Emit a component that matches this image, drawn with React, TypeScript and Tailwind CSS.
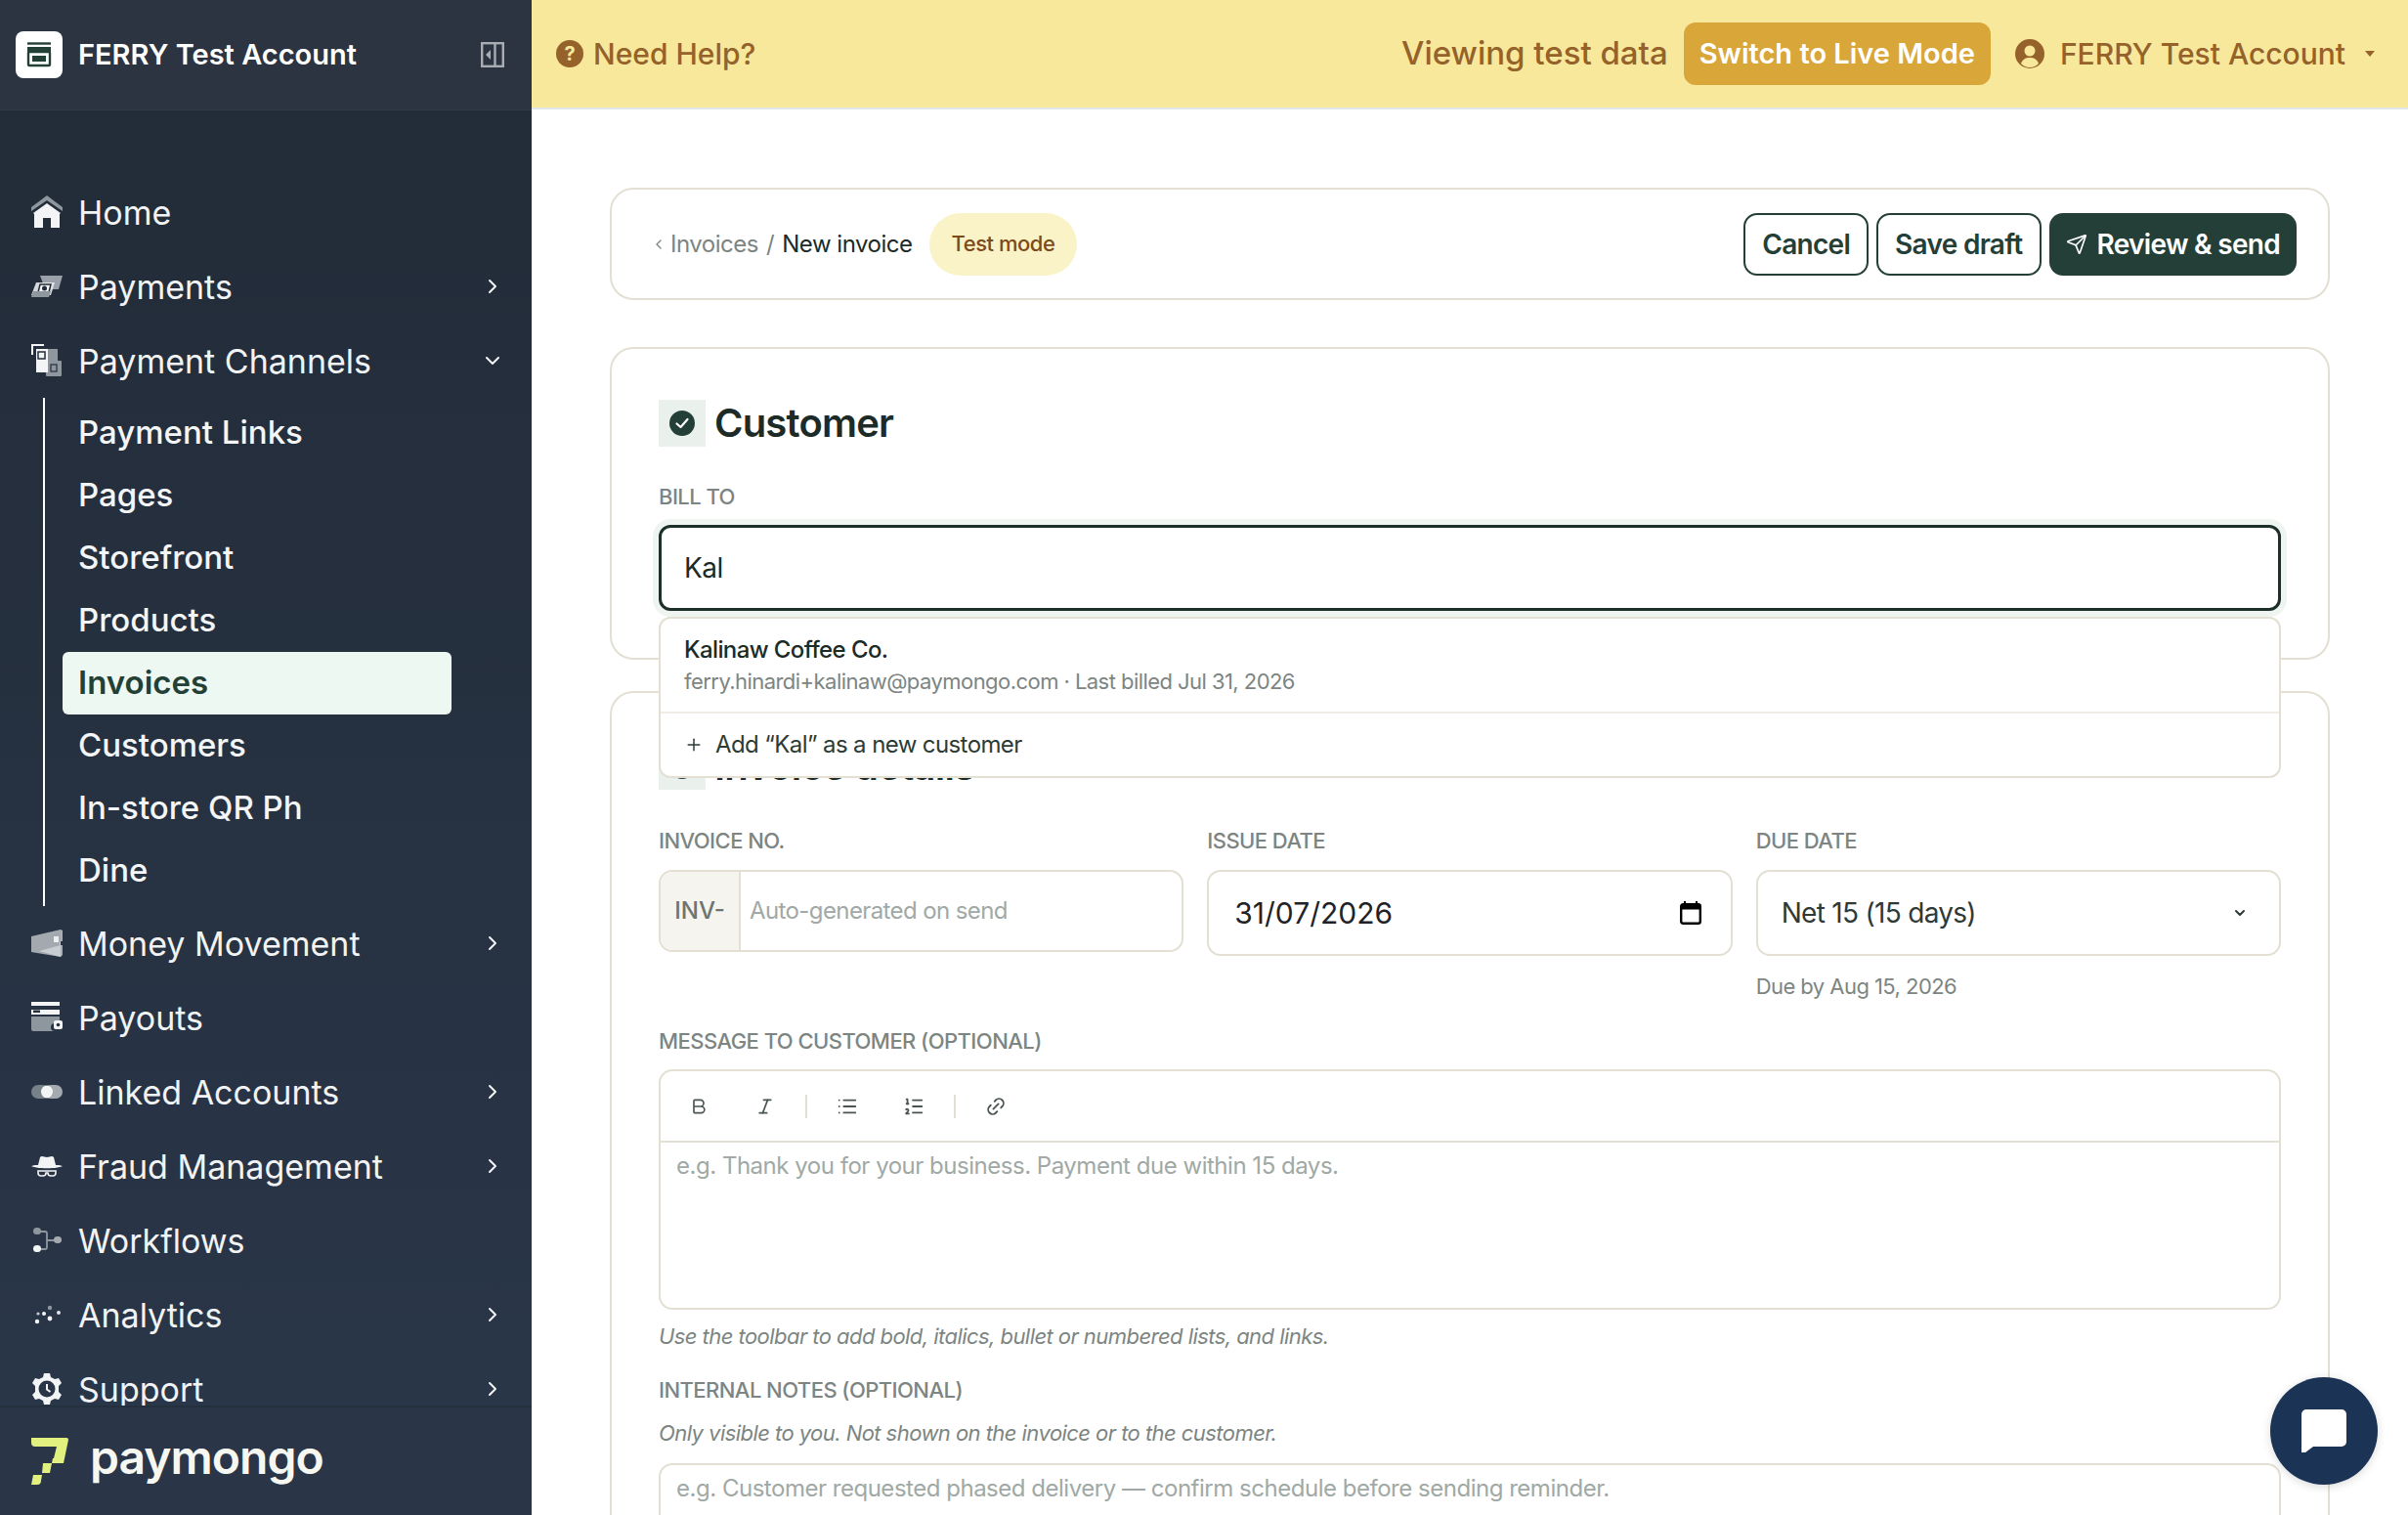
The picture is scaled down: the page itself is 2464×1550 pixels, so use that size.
import { Bold, ChevronDown, ChevronLeft, ChevronRight, Italic, Link2, List, ListOrdered, Plus, Send } from 'lucide-react'
import type { ReactNode } from 'react'

const inter = "font-['Inter',sans-serif]"

// duotone sidebar glyphs, white + muted grey like the real nav
const HomeIcon = () => (
  <svg width="32" height="34" viewBox="0 0 32 34">
    <path d="M16 0 32 12v4L16 5 0 16v-4z" fill="#8e969e" />
    <path d="M16 8 30 18l-1 1v14H20V23h-8v10H3V19l-1-1z" fill="#f3f4f5" />
  </svg>
)
const PaymentsIcon = () => (
  <svg width="32" height="24" viewBox="0 0 32 24">
    <path d="M9 1h23l-4 14H18l2-6h-8z" fill="#9aa1a8" />
    <path d="M5 8h19l-4 13H0z" fill="#e8eaec" opacity="0.9" />
    <path d="M9 10h11l-2 8H7z" fill="#f3f4f5" stroke="#232c38" strokeWidth="1.5" />
    <circle cx="13.5" cy="14" r="2.5" fill="#232c38" />
    <path d="M2 17h18l-2 6H0z" fill="#8e969e" />
  </svg>
)
const ChannelsIcon = () => (
  <svg width="32" height="34" viewBox="0 0 32 34">
    <rect x="16" y="5" width="11" height="12" fill="#8e969e" />
    <rect x="15" y="17" width="16" height="16" rx="1" fill="#8e969e" />
    <rect x="20" y="21" width="6" height="7" fill="none" stroke="#39424e" strokeWidth="1.5" />
    <rect x="5" y="5" width="12" height="24" fill="#f3f4f5" />
    <path d="M1 11V1h12" fill="none" stroke="#f3f4f5" strokeWidth="2" />
    <rect x="7" y="8" width="7" height="7" fill="none" stroke="#232c38" strokeWidth="1.5" />
  </svg>
)
const MoneyIcon = () => (
  <svg width="32" height="28" viewBox="0 0 32 28">
    <path d="M0 7 30 0v28L0 23z" fill="#a4a9af" />
    <path d="M30 0 32 1v11h-3v4h3v10l-2 2L8 22l22-6z" fill="#d5d8db" opacity="0.75" />
    <rect x="23" y="7" width="5" height="6" fill="#eceeef" />
  </svg>
)
const PayoutsIcon = () => (
  <svg width="32" height="32" viewBox="0 0 32 32">
    <path d="M0 0h29v4H0zM0 13h29v-5H0z" fill="#f3f4f5" />
    <rect x="2" y="8.5" width="7" height="2.5" fill="#26303c" />
    <path d="M0 15h29v7h-5a3 3 0 0 0 0 8H2a2 2 0 0 1-2-2z" fill="#8e969e" />
    <rect x="23" y="19" width="9" height="9" rx="2" fill="#f3f4f5" />
    <circle cx="27.5" cy="23.5" r="1.8" fill="#26303c" />
  </svg>
)
const LinkedIcon = () => (
  <svg width="32" height="16" viewBox="0 0 32 16">
    <rect x="0" y="1" width="19" height="14" rx="7" fill="#77818a" />
    <rect x="13" y="1" width="19" height="14" rx="7" fill="#a4aab0" />
    <ellipse cx="16" cy="8" rx="6" ry="6.5" fill="#f3f4f5" />
  </svg>
)
const FraudIcon = () => (
  <svg width="32" height="22" viewBox="0 0 32 22">
    <path d="M9 2c2-2 4 0 7 0s5-2 7 0l2 8H7z" fill="#f3f4f5" />
    <path d="M0 11c5-2 27-2 32 0-5 3-27 3-32 0z" fill="#f3f4f5" />
    <path d="M7 16h18v2a3 3 0 0 1-3 3h-2a3 3 0 0 1-3-3h-2a3 3 0 0 1-3 3h-2a3 3 0 0 1-3-3z" fill="none" stroke="#f3f4f5" strokeWidth="1.6" />
  </svg>
)
const WorkflowsIcon = () => (
  <svg width="32" height="26" viewBox="0 0 32 26">
    <path d="M8 4h6a2 2 0 0 1 2 2v14a2 2 0 0 1-2 2H8M16 13h8" fill="none" stroke="#8e969e" strokeWidth="1.8" />
    <rect x="2" y="0" width="8" height="7" rx="3.5" fill="#8e969e" />
    <rect x="2" y="18" width="8" height="7" rx="3.5" fill="#f3f4f5" />
    <rect x="23" y="9" width="8" height="7" rx="3.5" fill="#a4aab0" />
  </svg>
)
const AnalyticsIcon = () => (
  <svg width="32" height="20" viewBox="0 0 32 20">
    <circle cx="6" cy="17" r="2.2" fill="#f3f4f5" />
    <circle cx="7" cy="9" r="1.6" fill="#c7cbcf" />
    <circle cx="13" cy="9" r="2" fill="#f3f4f5" />
    <circle cx="19" cy="3" r="2.2" fill="#8e969e" />
    <circle cx="19" cy="14" r="2.4" fill="#f3f4f5" />
    <circle cx="28" cy="8" r="2" fill="#e3e5e7" />
  </svg>
)
const SupportIcon = () => (
  <svg width="32" height="32" viewBox="0 0 32 32">
    <path d="M13 0h6l1 4 4 2 4-1 3 5-3 3v6l3 3-3 5-4-1-4 2-1 4h-6l-1-4-4-2-4 1-3-5 3-3v-6L1 10l3-5 4 1 4-2z" fill="#f3f4f5" />
    <circle cx="16" cy="16" r="8.5" fill="#2a3648" />
    <path d="M16 11v5.5l3.5 2.5" fill="none" stroke="#f3f4f5" strokeWidth="2" />
  </svg>
)

function NavRow({ icon, label, chevron }: { icon: ReactNode; label: string; chevron?: 'right' | 'down' }) {
  return (
    <div className="flex h-[76px] shrink-0 items-center text-[34px] font-normal text-[#f1f3f4]">
      <div className="flex w-[80px] shrink-0 justify-center pl-[16px]">{icon}</div>
      <span className="flex-1">{label}</span>
      <div className="flex w-[64px] shrink-0 justify-center pr-[16px]">
        {chevron === 'right' && <ChevronRight size={24} strokeWidth={2} />}
        {chevron === 'down' && <ChevronDown size={24} strokeWidth={2} />}
      </div>
    </div>
  )
}

function Sidebar() {
  const subItems = ['Payment Links', 'Pages', 'Storefront', 'Products', 'Invoices', 'Customers', 'In-store QR Ph', 'Dine']
  return (
    <aside className={`flex h-full w-[544px] shrink-0 flex-col bg-gradient-to-b from-[#222b37] to-[#2a374a] ${inter}`}>
      <div className="flex h-[113px] shrink-0 items-center justify-between border-b border-[#303a46] bg-[#2b3440] pr-[28px] pl-[16px]">
        <div className="flex items-center gap-[16px]">
          <div className="flex h-[48px] w-[48px] items-center justify-center rounded-[8px] bg-white">
            <svg width="26" height="26" viewBox="0 0 26 26" fill="none">
              <path d="M1 1.5h24" stroke="#234036" strokeWidth="2.4" />
              <path d="M1 5h24l0 6H1z" fill="#234036" />
              <rect x="2" y="10" width="22" height="14" rx="1" stroke="#234036" strokeWidth="2.4" />
              <rect x="6" y="14" width="14" height="6" fill="#234036" />
            </svg>
          </div>
          <span className="text-[29px] font-semibold text-white">FERRY Test Account</span>
        </div>
        <svg width="24" height="26" viewBox="0 0 24 26" fill="none">
          <rect x="1.2" y="1.2" width="21.6" height="23.6" stroke="#a9adb2" strokeWidth="2.4" />
          <path d="M14.5 1v24" stroke="#a9adb2" strokeWidth="2.4" />
          <path d="M10 8v10l-5-5z" fill="#a9adb2" />
        </svg>
      </div>

      <nav className="flex min-h-0 flex-1 flex-col overflow-hidden pt-[66px]">
        <NavRow icon={<HomeIcon />} label="Home" />
        <NavRow icon={<PaymentsIcon />} label="Payments" chevron="right" />
        <NavRow icon={<ChannelsIcon />} label="Payment Channels" chevron="down" />
        <div className="ml-[44px] shrink-0 border-l-2 border-white py-[4px]">
          {subItems.map((item) =>
            item === 'Invoices' ? (
              <div key={item} className="ml-[18px] flex h-[64px] w-[398px] items-center rounded-[6px] bg-[#eef8f3] pl-[16px] text-[33px] font-semibold text-[#234036]">
                {item}
              </div>
            ) : (
              <div key={item} className="ml-[18px] flex h-[64px] w-[398px] items-center pl-[16px] text-[33px] font-medium text-[#f4f5f6]">
                {item}
              </div>
            ),
          )}
        </div>
        <NavRow icon={<MoneyIcon />} label="Money Movement" chevron="right" />
        <NavRow icon={<PayoutsIcon />} label="Payouts" />
        <NavRow icon={<LinkedIcon />} label="Linked Accounts" chevron="right" />
        <NavRow icon={<FraudIcon />} label="Fraud Management" chevron="right" />
        <NavRow icon={<WorkflowsIcon />} label="Workflows" />
        <NavRow icon={<AnalyticsIcon />} label="Analytics" chevron="right" />
        <NavRow icon={<SupportIcon />} label="Support" chevron="right" />
      </nav>

      <div className="flex h-[112px] shrink-0 items-center gap-[22px] border-t-2 border-[#25303f] bg-[#2a3648] pl-[32px]">
        <svg width="38" height="48" viewBox="0 0 38 48">
          <path d="M0 0h36a2 2 0 0 1 2 2l-5 24H21l1-5h1l3-12H4a4 4 0 0 1-4-4z" fill="#e2f07f" />
          <path d="M12 26h9l-2 10h-8zM2 38h9l-1 6a4 4 0 0 1-4 4H0z" fill="#e2f07f" />
        </svg>
        <span className={`-mt-[8px] text-[48px] leading-none font-semibold tracking-[-0.02em] text-[#f7f7f2]`}>paymongo</span>
      </div>
    </aside>
  )
}

function TopBar() {
  return (
    <header className={`flex h-[112px] shrink-0 items-center justify-between border-b-2 border-[#e2e6ea] bg-[#f8e89b] pr-[34px] pl-[25px] text-[#94622a] ${inter}`}>
      <div className="flex items-center gap-[10px]">
        <svg width="28" height="28" viewBox="0 0 28 28">
          <circle cx="14" cy="14" r="14" fill="#94622a" />
          <text x="14" y="21" textAnchor="middle" fontSize="20" fontWeight="700" fill="#f8e89b" fontFamily="Inter, sans-serif">?</text>
        </svg>
        <span className="text-[30px] font-medium">Need Help?</span>
      </div>
      <div className="flex items-center">
        <span className="text-[33px] font-medium">Viewing test data</span>
        <div className="ml-[16px] flex h-[64px] items-center rounded-[12px] bg-[#d9a63a] px-[16px] text-[29px] font-semibold text-white">Switch to Live Mode</div>
        <svg className="ml-[25px]" width="30" height="30" viewBox="0 0 30 30">
          <circle cx="15" cy="15" r="15" fill="#94622a" />
          <circle cx="15" cy="12" r="5.5" fill="#f8e89b" />
          <path d="M6 25c2-5 5-6 9-6s7 1 9 6a12 12 0 0 1-18 0z" fill="#f8e89b" />
        </svg>
        <span className="ml-[16px] text-[30px] font-medium">FERRY Test Account</span>
        <svg className="ml-[20px]" width="10" height="6" viewBox="0 0 10 6"><path d="M0 0h10L5 6z" fill="#94622a" /></svg>
      </div>
    </header>
  )
}

function FieldLabel({ children, className = '' }: { children: ReactNode; className?: string }) {
  return <div className={`text-[22px] leading-[30px] font-medium tracking-[-0.025em] text-[#7c8582] ${className}`}>{children}</div>
}

function SectionTitle({ title }: { title: string }) {
  return (
    <div className="flex items-center gap-[9px]">
      <div className="flex h-[48px] w-[48px] items-center justify-center bg-[#eaf1ed]">
        <svg width="26" height="26" viewBox="0 0 26 26">
          <circle cx="13" cy="13" r="13" fill="#233f38" />
          <path d="M7.5 13.5l4 3.5 7-8" fill="none" stroke="#fff" strokeWidth="2.2" strokeLinecap="round" strokeLinejoin="round" />
        </svg>
      </div>
      <h2 className="text-[40px] leading-[48px] font-semibold tracking-[-0.02em] text-[#1c2b27]">{title}</h2>
    </div>
  )
}

function ToolButton({ children }: { children: ReactNode }) {
  return <div className="flex h-[48px] w-[68px] items-center justify-center text-[#4a5451]">{children}</div>
}

function ToolSep() {
  return <div className="mx-[7px] h-[24px] w-[2px] bg-[#e3dfd3]" />
}

function Main() {
  return (
    <main className={`flex min-w-0 flex-1 flex-col overflow-hidden bg-white ${inter}`}>
      <TopBar />
      <div className="flex min-h-0 flex-1 flex-col gap-[48px] overflow-hidden px-[80px] pt-[80px]">
        <div className="flex h-[115px] shrink-0 items-center justify-between rounded-[24px] border-2 border-[#e3dfd3] pr-[32px] pl-[40px]">
          <div className="flex items-center text-[24px] tracking-[-0.02em]">
            <ChevronLeft size={16} className="text-[#7c8582]" />
            <span className="ml-[4px] text-[#7c8582]">Invoices</span>
            <span className="mx-[8px] text-[#7c8582]">/</span>
            <span className="text-[#1c2b27]">New invoice</span>
            <div className="ml-[17px] flex h-[64px] items-center rounded-full bg-[#fbf3c8] px-[23px] text-[22px] font-medium text-[#7d4a1a]">Test mode</div>
          </div>
          <div className="flex items-center gap-[8px] text-[28px] font-semibold tracking-[-0.025em]">
            <div className="flex h-[64px] items-center rounded-[14px] border-2 border-[#233f38] px-[17px] text-[#233f38]">Cancel</div>
            <div className="flex h-[64px] items-center rounded-[14px] border-2 border-[#233f38] px-[17px] text-[#233f38]">Save draft</div>
            <div className="flex h-[64px] items-center gap-[10px] rounded-[14px] bg-[#233f38] px-[17px] text-white">
              <Send size={22} strokeWidth={1.8} />
              Review &amp; send
            </div>
          </div>
        </div>

        <div className="-mt-[0px] flex shrink-0 flex-col gap-[32px]">
          <section className="relative h-[320px] rounded-[24px] border-2 border-[#e3dfd3] px-[48px] pt-[52px]">
            <SectionTitle title="Customer" />
            <FieldLabel className="mt-[36px]">BILL TO</FieldLabel>
            <div className="mt-[14px] flex h-[88px] items-center rounded-[12px] border-[3px] border-[#1c2f2a] pl-[23px] text-[28px] tracking-[-0.02em] text-[#1c2b27] shadow-[0_0_0_6px_#eef5f0]">Kal</div>
            <div className="absolute top-[274px] right-[48px] left-[48px] z-10 rounded-[12px] border-2 border-[#e3dfd3] bg-white">
              <div className="flex h-[97px] flex-col justify-center border-b-2 border-[#efede6] pl-[24px]">
                <div className="text-[24px] leading-[32px] font-medium tracking-[-0.025em] text-[#1c2b27]">Kalinaw Coffee Co.</div>
                <div className="text-[22px] leading-[32px] tracking-[-0.025em] text-[#7c8582]">ferry.hinardi+kalinaw@paymongo.com · Last billed Jul 31, 2026</div>
              </div>
              <div className="flex h-[64px] items-center gap-[12px] pl-[24px] text-[24px] tracking-[-0.025em] text-[#2d3b37]">
                <Plus size={20} strokeWidth={1.8} />
                Add “Kal” as a new customer
              </div>
            </div>
          </section>

          <section className="rounded-[24px] border-2 border-[#e3dfd3] px-[48px] pt-[51px]">
            <SectionTitle title="Invoice details" />
            <div className="mt-[37px] grid grid-cols-3 gap-x-[24px]">
              <div>
                <FieldLabel>INVOICE NO.</FieldLabel>
                <div className="mt-[15px] flex h-[84px] overflow-hidden rounded-[14px] border-2 border-[#e3dfd3]">
                  <div className="flex w-[82px] items-center justify-center border-r-2 border-[#e3dfd3] bg-[#f5f4ef] text-[24px] font-medium text-[#6b7571]">INV-</div>
                  <div className="flex flex-1 items-center pl-[9px] text-[24px] tracking-[-0.025em] text-[#a0a9a5]">Auto-generated on send</div>
                </div>
              </div>
              <div>
                <FieldLabel>ISSUE DATE</FieldLabel>
                <div className="mt-[15px] flex h-[88px] items-center justify-between rounded-[14px] border-2 border-[#e3dfd3] pr-[30px] pl-[26px] text-[30px] text-[#1f2328]">
                  31/07/2026
                  <svg width="22" height="24" viewBox="0 0 22 24" fill="none">
                    <path d="M5 0v4M17 0v4" stroke="#000" strokeWidth="2" />
                    <rect x="1.2" y="3.2" width="19.6" height="19.6" rx="2" stroke="#000" strokeWidth="2.4" />
                    <path d="M1 6h20" stroke="#000" strokeWidth="5" />
                  </svg>
                </div>
              </div>
              <div>
                <FieldLabel>DUE DATE</FieldLabel>
                <div className="mt-[15px] flex h-[88px] items-center justify-between rounded-[14px] border-2 border-[#e3dfd3] pr-[32px] pl-[24px] text-[28px] tracking-[-0.025em] text-[#2f3a36]">
                  Net 15 (15 days)
                  <ChevronDown size={16} strokeWidth={3} />
                </div>
                <div className="mt-[16px] text-[22px] leading-[30px] tracking-[-0.025em] text-[#7c8582]">Due by Aug 15, 2026</div>
              </div>
            </div>

            <FieldLabel className="mt-[26px]">MESSAGE TO CUSTOMER (OPTIONAL)</FieldLabel>
            <div className="mt-[14px] h-[246px] rounded-[14px] border-2 border-[#e3dfd3]">
              <div className="flex h-[73px] items-center border-b-2 border-[#e3dfd3] pl-[5px]">
                <ToolButton><Bold size={20} strokeWidth={2} /></ToolButton>
                <ToolButton><Italic size={20} strokeWidth={2} /></ToolButton>
                <ToolSep />
                <ToolButton><List size={22} strokeWidth={2} /></ToolButton>
                <ToolButton><ListOrdered size={22} strokeWidth={2} /></ToolButton>
                <ToolSep />
                <ToolButton><Link2 size={22} strokeWidth={2} className="-rotate-45" /></ToolButton>
              </div>
              <div className="pt-[8px] pl-[16px] text-[24px] leading-[32px] tracking-[-0.02em] text-[#a0a9a5]">e.g. Thank you for your business. Payment due within 15 days.</div>
            </div>
            <div className="mt-[12px] text-[22px] leading-[30px] tracking-[-0.025em] text-[#7c8582] italic">Use the toolbar to add bold, italics, bullet or numbered lists, and links.</div>

            <FieldLabel className="mt-[25px]">INTERNAL NOTES (OPTIONAL)</FieldLabel>
            <div className="mt-[14px] text-[22px] leading-[30px] tracking-[-0.025em] text-[#7c8582] italic">Only visible to you. Not shown on the invoice or to the customer.</div>
            <div className="mt-[16px] h-[120px] rounded-t-[14px] border-2 border-[#e3dfd3] pt-[8px] pl-[16px] text-[24px] leading-[32px] tracking-[-0.02em] text-[#a0a9a5]">
              e.g. Customer requested phased delivery — confirm schedule before sending reminder.
            </div>
          </section>
        </div>
      </div>
    </main>
  )
}

export default function App() {
  return (
    <div className="relative flex h-[1550px] w-[2464px] overflow-hidden bg-white">
      <Sidebar />
      <Main />
      <div className="absolute top-[1409px] left-[2323px] z-20 flex h-[110px] w-[110px] items-center justify-center rounded-full bg-[#1b3355] shadow-[0_2px_10px_rgba(0,0,0,0.15)]">
        <svg width="46" height="44" viewBox="0 0 46 44">
          <path d="M5 0h36a5 5 0 0 1 5 5v28a5 5 0 0 1-5 5H12l-8 6a2 2 0 0 1-4-2V5a5 5 0 0 1 5-5z" fill="#fff" />
        </svg>
      </div>
    </div>
  )
}
